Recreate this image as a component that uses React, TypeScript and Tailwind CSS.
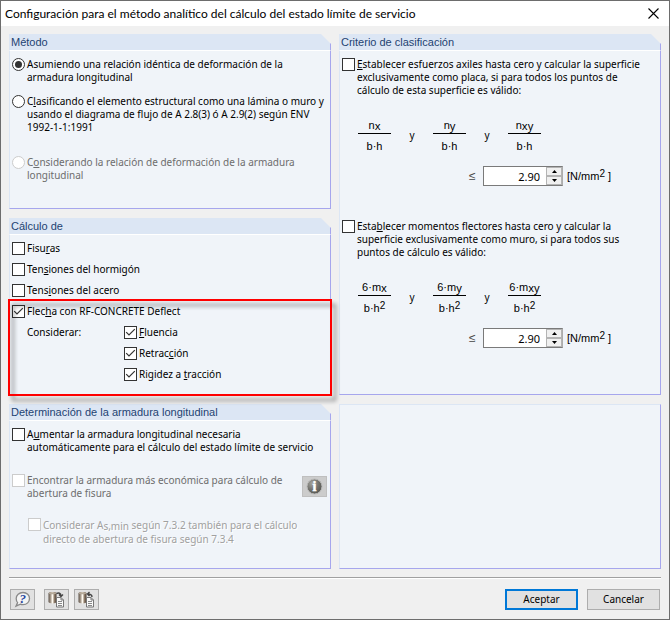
import { useId, useState } from "react";
import type { ComponentProps, ReactNode } from "react";
import clsx from "clsx";

type PanelProps = {
  title?: string;
  className?: string;
  children?: ReactNode;
};

const Panel = ({ title, className, children }: PanelProps) => (
  <section className={clsx("flex flex-col", className)}>
    {title && (
      <h2 className="h-4 border-r border-[#a6a6ed] bg-[#dce6f4] pl-0.5 font-['Liberation_Sans',sans-serif] text-[11px] leading-4 text-[#1e4372] [clip-path:polygon(0_0,calc(100%-10px)_0,100%_10px,100%_100%,0_100%)]">
        {title}
      </h2>
    )}
    <div
      className={clsx(
        "flex-1 border border-r-[#a6a6ed] border-b-[#a6a6ed] border-l-[#dce6f4] bg-[#f0f4f9] px-0.5",
        title ? "border-t-white pt-[7px]" : "border-t-[#dce6f4]",
      )}
    >
      {children}
    </div>
  </section>
);

type CheckProps = {
  children: ReactNode;
  defaultChecked?: boolean;
  disabled?: boolean;
  className?: string;
};

const Check = ({ children, defaultChecked, disabled, className }: CheckProps) => (
  <label className={clsx("flex items-start gap-0.5", disabled && "text-[#6d6d6d]", className)}>
    <span className="grid size-[13px] shrink-0">
      <input
        type="checkbox"
        defaultChecked={defaultChecked}
        disabled={disabled}
        className="peer col-start-1 row-start-1 size-[13px] appearance-none border border-[#333] bg-white disabled:border-[#ccc]"
      />
      <svg
        viewBox="0 0 13 13"
        className="pointer-events-none col-start-1 row-start-1 hidden size-[13px] peer-checked:block"
        fill="none"
        stroke="#333"
        strokeWidth="1.2"
      >
        <path d="M2.2 6.2 5 9 10.8 3.2" />
      </svg>
    </span>
    <span>{children}</span>
  </label>
);

const Radio = ({ children, disabled, defaultChecked }: CheckProps) => (
  <label className={clsx("flex items-start gap-0.5", disabled && "text-[#6d6d6d]")}>
    <span className="grid size-[13px] shrink-0 place-items-center">
      <input
        type="radio"
        name="metodo"
        defaultChecked={defaultChecked}
        disabled={disabled}
        className="peer col-start-1 row-start-1 size-[13px] appearance-none rounded-full border border-[#333] bg-white disabled:border-[#ccc]"
      />
      <span className="pointer-events-none col-start-1 row-start-1 hidden size-[7px] rounded-full bg-[#333] peer-checked:block" />
    </span>
    <span>{children}</span>
  </label>
);

const Squared = () => <sup className="-top-[3px] text-[10px]">2</sup>;

const Fraction = ({ top, sub, bottom }: { top: string; sub: string; bottom: ReactNode }) => (
  <div className="w-[33px] text-center font-['Liberation_Sans',sans-serif] text-[11px] leading-4 whitespace-nowrap">
    <div className="h-[17px] border-b border-black">
      {top}
      <sub className="-bottom-px font-['Noto_Sans',sans-serif] text-[11px]">{sub}</sub>
    </div>
    <div className="mt-1 h-4">{bottom}</div>
  </div>
);

const Formula = ({ top, bottom }: { top: string; bottom: ReactNode }) => (
  <div className="mt-5 flex items-center pl-4">
    <Fraction top={top} sub="x" bottom={bottom} />
    <span className="w-[42px] text-center">y</span>
    <Fraction top={top} sub="y" bottom={bottom} />
    <span className="w-[42px] text-center">y</span>
    <Fraction top={top} sub="xy" bottom={bottom} />
  </div>
);

const Limit = () => {
  const id = useId();
  const [value, setValue] = useState("2.90");
  const step = (delta: number) => setValue((v) => (Number(v) + delta).toFixed(2));
  const spin =
    "flex flex-1 items-center justify-center border border-[#b4b4b4] bg-[#f0f0f0]";

  return (
    <div className="mt-3 flex h-5 items-center pl-[127px]">
      <label htmlFor={id} className="w-3.5 font-['Liberation_Sans',sans-serif] text-[12px] text-[#444]">
        ≤
      </label>
      <div className="flex h-5 w-20 border border-[#7a7a7a] border-r-[#acacac] bg-white">
        <input
          id={id}
          type="text"
          value={value}
          onChange={(e) => setValue(e.target.value)}
          className="w-full min-w-0 flex-1 pr-1.5 text-right text-[11px] outline-none"
        />
        <div className="flex w-4 flex-col">
          <button type="button" aria-label="Aumentar" className={spin} onClick={() => step(0.1)}>
            <svg viewBox="0 0 5 3" className="h-[3px] w-[5px]">
              <path d="M0 3 2.5 0 5 3z" />
            </svg>
          </button>
          <button type="button" aria-label="Reducir" className={spin} onClick={() => step(-0.1)}>
            <svg viewBox="0 0 5 3" className="h-[3px] w-[5px]">
              <path d="M0 0 2.5 3 5 0z" />
            </svg>
          </button>
        </div>
      </div>
      <span className="pl-1 font-['Liberation_Sans',sans-serif] text-[11px] whitespace-nowrap">
        [N/mm
        <Squared /> ]
      </span>
    </div>
  );
};

const ToolButton = ({ className, ...props }: ComponentProps<"button">) => (
  <button
    type="button"
    className={clsx("flex h-[21px] w-[25px] items-center justify-center border", className)}
    {...props}
  />
);

const HelpIcon = () => (
  <svg viewBox="0 0 17 17" className="size-[17px]">
    <path
      d="M9 1.5c3.9 0 6.5 2.7 6.5 6s-2.6 6.2-6.5 6.2c-1 0-1.9-.1-2.7-.5L2 15.2l1.6-3.6C2.6 10.5 2.2 9.1 2.2 7.5c0-3.3 2.9-6 6.8-6z"
      fill="#f4f4f4"
      stroke="#8a8a8a"
      strokeWidth="1.3"
    />
    <text
      x="8.8"
      y="12"
      textAnchor="middle"
      fontSize="13"
      fontWeight="700"
      fontStyle="italic"
      fontFamily="Liberation Serif, serif"
      fill="#26459c"
    >
      ?
    </text>
  </svg>
);

const DataIcon = ({ arrow }: { arrow: string }) => {
  const id = useId();
  return (
    <svg viewBox="0 0 17 17" className="size-[17px]">
      <defs>
        <linearGradient id={id} x1="0" x2="1">
          <stop offset="0" stopColor="#5c5148" />
          <stop offset="0.25" stopColor="#a39688" />
          <stop offset="0.5" stopColor="#fffaf0" />
          <stop offset="0.75" stopColor="#8c7a68" />
          <stop offset="1" stopColor="#4a3d33" />
        </linearGradient>
      </defs>
      <path d="M.5 2.5C.5.6 8.5.6 8.5 2.5V11c0 1.9-8 1.9-8 0z" fill={`url(#${id})`} />
      <ellipse cx="4.5" cy="2.3" rx="3.6" ry="1" fill="#b5a999" />
      <path d={arrow} fill="none" stroke="#444" strokeWidth="1.4" />
      <path d="M8.5 6.5H13L15.5 9v7h-7z" fill="#fafafa" stroke="#777" />
      <path d="M13 6.5V9h2.5" fill="none" stroke="#777" />
      <path d="M10 10.5h4M10 12.5h4M10 14.5h4" stroke="#888" />
    </svg>
  );
};

const InfoIcon = () => (
  <svg viewBox="0 0 17 17" className="size-[17px]">
    <defs>
      <radialGradient id="info" cx="0.35" cy="0.3" r="0.8">
        <stop offset="0" stopColor="#a5a5a0" />
        <stop offset="0.5" stopColor="#74746f" />
        <stop offset="1" stopColor="#50504c" />
      </radialGradient>
    </defs>
    <circle cx="8.5" cy="8.5" r="7.5" fill="url(#info)" stroke="#b9b9b9" />
    <text
      x="8.5"
      y="13"
      textAnchor="middle"
      fontSize="14"
      fontWeight="700"
      fontFamily="Liberation Serif, serif"
      fill="#fff"
      stroke="#fff"
      strokeWidth="0.5"
    >
      i
    </text>
  </svg>
);

export default function App() {
  return (
    <main className="flex min-h-screen flex-col border border-[#6d6d6d] bg-[#f0f0f0] font-['Noto_Sans',sans-serif] text-[10px] leading-[13px] text-black">
      <header className="flex h-[25px] items-center justify-between bg-white pr-2.5 pl-1">
        <h1 className="font-['Lato',sans-serif] text-[12px] leading-4">
          Configuración para el método analítico del cálculo del estado límite de servicio
        </h1>
        <button type="button" aria-label="Cerrar">
          <svg viewBox="0 0 11 11" className="size-[11px]" stroke="#000" strokeWidth="1.1">
            <path d="M.5.5l10 10M10.5.5l-10 10" />
          </svg>
        </button>
      </header>

      <div className="grid flex-1 grid-cols-2 grid-rows-[auto_auto_1fr] gap-x-2 gap-y-[9px] px-2 pt-2">
        <Panel title="Método">
          <div className="flex flex-col pb-[26px]">
            <Radio defaultChecked>
              Asumiendo una relación idéntica de deformación de la
              <br />
              armadura longitudinal
            </Radio>
            <div className="pt-[11px] pb-[22px]">
              <Radio>
                C<u>l</u>asificando el elemento estructural como una lámina o muro y
                <br />
                usando el diagrama de flujo de A 2.8(3) ó A 2.9(2) según ENV
                <br />
                1992-1-1:1991
              </Radio>
            </div>
            <Radio disabled>
              C<u>o</u>nsiderando la relación de deformación de la armadura
              <br />
              longitudinal
            </Radio>
          </div>
        </Panel>

        <Panel title="Criterio de clasificación" className="row-span-2">
          <Check>
            <u>E</u>stablecer esfuerzos axiles hasta cero y calcular la superficie
            <br />
            exclusivamente como placa, si para todos los puntos de
            <br />
            cálculo de esta superficie es válido:
          </Check>
          <Formula top="n" bottom="b·h" />
          <Limit />
          <Check className="mt-[34px]">
            Esta<u>b</u>lecer momentos flectores hasta cero y calcular la
            <br />
            superficie exclusivamente como muro, si para todos sus
            <br />
            puntos de cálculo es válido:
          </Check>
          <Formula top="6·m" bottom={<>b·h<Squared /></>} />
          <Limit />
        </Panel>

        <Panel title="Cálculo de">
          <div className="flex flex-col gap-2">
            <Check>
              Fisu<u>r</u>as
            </Check>
            <Check>
              Ten<u>s</u>iones del hormigón
            </Check>
            <Check>
              Tens<u>i</u>ones del acero
            </Check>
            <div className="relative pb-[13px]">
              {/* highlight frame around the deflection options */}
              <div className="pointer-events-none absolute -top-1.5 -right-1 -bottom-0.5 -left-1 z-10 border-2 border-[#f00] drop-shadow-[4px_5px_2px_rgba(0,0,0,0.45)]" />
              <Check defaultChecked>
                Flec<u>h</u>a con RF-CONCRETE Deflect
              </Check>
              <fieldset className="mt-2 flex pl-[15px]">
                <legend className="float-left w-[97px]">Considerar:</legend>
                <div className="flex flex-col gap-2">
                  <Check defaultChecked>
                    <u>F</u>luencia
                  </Check>
                  <Check defaultChecked>
                    Retrac<u>c</u>ión
                  </Check>
                  <Check defaultChecked>
                    Rigidez a <u>t</u>racción
                  </Check>
                </div>
              </fieldset>
            </div>
          </div>
        </Panel>

        <Panel title="Determinación de la armadura longitudinal">
          <Check>
            A<u>u</u>mentar la armadura longitudinal necesaria
            <br />
            automáticamente para el cálculo del estado límite de servicio
          </Check>
          <div className="mt-5 flex items-start justify-between">
            <Check disabled>
              Encontrar la armadura más económica para cálculo de
              <br />
              abertura de fisura
            </Check>
            <ToolButton
              aria-label="Información"
              className="mt-0.5 mr-px border-[#bfbfbf] bg-[#ccc]"
            >
              <InfoIcon />
            </ToolButton>
          </div>
          <Check
            disabled
            className="mt-[18px] pl-4 leading-[14px] text-[#a0a0a0] [text-shadow:1px_1px_0_#fff]"
          >
            Considerar A<sub className="-bottom-px text-[10px]">s,min</sub> según 7.3.2 también para el cálculo
            <br />
            directo de abertura de fisura según 7.3.4
          </Check>
        </Panel>

        <Panel />
      </div>

      <footer className="mx-2 mt-2 border-t border-[#a0a0a0] pb-[9px]">
        <div className="flex items-center border-t border-white pt-2.5">
          <ToolButton aria-label="Ayuda" className="mr-[9px] ml-px border-[#adadad] bg-[#e1e1e1]">
            <HelpIcon />
          </ToolButton>
          <ToolButton
            aria-label="Cargar valores"
            className="mr-[5px] border-[#adadad] bg-[#e1e1e1]"
          >
            <DataIcon arrow="M8.5 2.5C10.5 1.5 13 2 13 5M11 3.5l2 2 2-2" />
          </ToolButton>
          <ToolButton aria-label="Guardar valores" className="border-[#adadad] bg-[#e1e1e1]">
            <DataIcon arrow="M14 6C14 3.5 12.5 3 9.5 3M11.5 1l-2 2 2 2" />
          </ToolButton>
          <div className="ml-auto flex gap-[9px] pr-px">
            <button type="button" className="h-[21px] w-[73px] border-2 border-[#0078d7] bg-[#e1e1e1]">
              Aceptar
            </button>
            <button type="button" className="h-[21px] w-[73px] border border-[#adadad] bg-[#e1e1e1]">
              Cancelar
            </button>
          </div>
        </div>
      </footer>
    </main>
  );
}
